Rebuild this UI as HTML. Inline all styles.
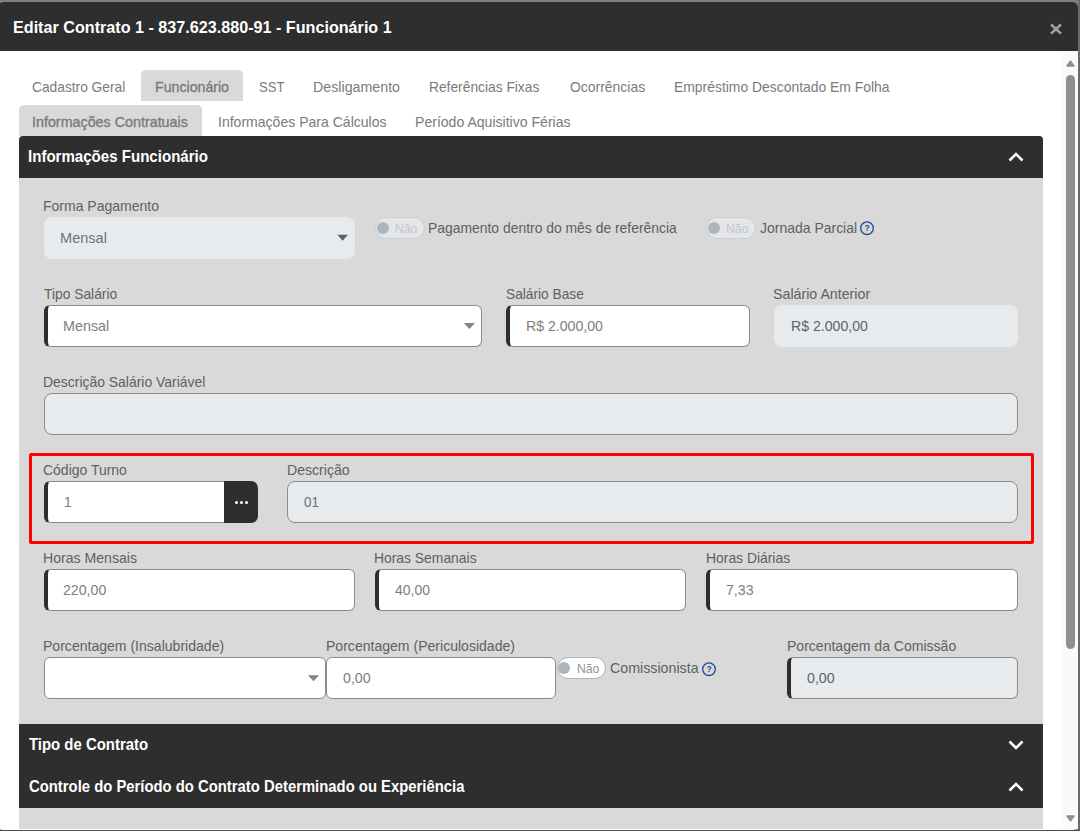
<!DOCTYPE html>
<html><head><meta charset="utf-8">
<style>
html,body{margin:0;padding:0;width:1080px;height:831px;overflow:hidden;background:#7f7f7f;font-family:"Liberation Sans",sans-serif;}
.a{position:absolute;box-sizing:border-box;}
.t{position:absolute;white-space:nowrap;line-height:1;transform-origin:0 0;font-family:"Liberation Sans",sans-serif;}
</style></head><body>
<!-- right strip -->
<div class=a style="left:1078px;top:0;width:2px;height:831px;background:#6a6a6a"></div>
<div class=a style="left:0;top:830px;width:1080px;height:1px;background:#4d4d4d"></div>
<!-- dialog -->
<div class=a style="left:-2px;top:2px;width:1080px;height:828px;background:#fff;border-radius:5px;overflow:hidden">
  <div class=a style="left:0;top:0;width:1080px;height:49px;background:#2e2e2e"></div>
</div>
<!-- close x -->
<svg class=a style="left:1048px;top:21px" width="16" height="16" viewBox="0 0 16 16"><path d="M3 3.5 L13 12.6 M13 3.5 L3 12.6" stroke="#a3a3a3" stroke-width="2.5" fill="none"/></svg>
<!-- scrollbar -->
<div class=a style="left:1063px;top:51px;width:15px;height:778px;background:#fafafa"></div>
<svg class=a style="left:1066px;top:60px" width="9" height="7" viewBox="0 0 9 7"><path d="M4.5 1.1 L8.1 6 L0.9 6 Z" fill="#8f8f8f" stroke="#8f8f8f" stroke-width="1.4" stroke-linejoin="round"/></svg>
<div class=a style="left:1066px;top:75px;width:9px;height:574px;background:#8f8f8f;border-radius:4.5px"></div>
<svg class=a style="left:1066px;top:815px" width="9" height="7" viewBox="0 0 9 7"><path d="M0.9 1 L8.1 1 L4.5 5.9 Z" fill="#8f8f8f" stroke="#8f8f8f" stroke-width="1.4" stroke-linejoin="round"/></svg>
<!-- tabs -->
<div class=a style="left:141px;top:70px;width:102px;height:31px;background:#d9d9d9;border-radius:5px 5px 0 0"></div>
<div class=a style="left:19px;top:105px;width:183px;height:31px;background:#d9d9d9;border-radius:5px 5px 0 0"></div>
<!-- section 1 -->
<div class=a style="left:19px;top:136px;width:1024px;height:42px;background:#2e2e2e;border-radius:4px 4px 0 0"></div>
<svg class=a style="left:1006px;top:149px" width="20" height="16" viewBox="0 0 20 16"><path d="M3.5 11.5 L10 5 L16.5 11.5" stroke="#fff" stroke-width="2.6" fill="none"/></svg>
<div class=a style="left:19px;top:178px;width:1024px;height:546px;background:#d9d9d9"></div>
<!-- section 2,3 -->
<div class=a style="left:19px;top:724px;width:1024px;height:84px;background:#2e2e2e"></div>
<svg class=a style="left:1006px;top:737px" width="20" height="16" viewBox="0 0 20 16"><path d="M3.5 4.5 L10 11 L16.5 4.5" stroke="#fff" stroke-width="2.6" fill="none"/></svg>
<svg class=a style="left:1006px;top:779px" width="20" height="16" viewBox="0 0 20 16"><path d="M3.5 11.5 L10 5 L16.5 11.5" stroke="#fff" stroke-width="2.6" fill="none"/></svg>
<div class=a style="left:19px;top:808px;width:1024px;height:21px;background:#d9d9d9"></div>

<!-- Row A -->
<div class=a style="left:44px;top:217px;width:311px;height:42px;background:#e8ebee;border-radius:8px"></div>
<svg class=a style="left:336px;top:233px" width="14" height="9" viewBox="0 0 14 9"><path d="M1.3 1.8 L12 1.8 L6.65 7.8 Z" fill="#5a636b"/></svg>
<div class=a style="left:375px;top:217px;width:50px;height:22px;background:#e4e6e9;border:1px solid #c9cdd1;border-radius:11px"></div>
<div class=a style="left:377px;top:222px;width:12px;height:12px;background:#adb5bd;border-radius:50%"></div>
<div class=a style="left:706px;top:217px;width:50px;height:22px;background:#e4e6e9;border:1px solid #c9cdd1;border-radius:11px"></div>
<div class=a style="left:708px;top:222px;width:12px;height:12px;background:#adb5bd;border-radius:50%"></div>
<svg class=a style="left:859px;top:220px" width="16" height="16" viewBox="0 0 16 16"><circle cx="8" cy="8.2" r="6.3" stroke="#22508e" stroke-width="1.35" fill="none"/><text x="8" y="11.2" text-anchor="middle" font-family="Liberation Sans" font-weight="700" font-size="8.5" fill="#22508e">?</text></svg>

<!-- Row B -->
<div class=a style="left:44px;top:305px;width:438px;height:42px;background:#fff;border:1px solid #8c8c8c;border-left:4px solid #2e2e2e;border-radius:6px"></div>
<svg class=a style="left:462px;top:321px" width="14" height="9" viewBox="0 0 14 9"><path d="M1.9 1.9 L12.9 1.9 L7.4 8 Z" fill="#858585"/></svg>
<div class=a style="left:506px;top:305px;width:244px;height:42px;background:#fff;border:1px solid #8c8c8c;border-left:4px solid #2e2e2e;border-radius:6px"></div>
<div class=a style="left:774px;top:305px;width:244px;height:42px;background:#e8ebee;border-radius:8px"></div>

<!-- Row C -->
<div class=a style="left:44px;top:393px;width:974px;height:42px;background:#e8ebee;border:1px solid #8c8c8c;border-radius:8px"></div>

<!-- Row D -->
<div class=a style="left:29px;top:453px;width:1005px;height:91px;border:3px solid #ff0000;border-radius:2px"></div>
<div class=a style="left:44px;top:481px;width:182px;height:42px;background:#fff;border:1px solid #8c8c8c;border-left:4px solid #2e2e2e;border-radius:6px 0 0 6px"></div>
<div class=a style="left:224px;top:481px;width:34px;height:42px;background:#2e2e2e;border-radius:0 7px 7px 0"></div>
<div class=a style="left:234.5px;top:500.6px;width:3.6px;height:3.6px;background:#fff;border-radius:50%"></div>
<div class=a style="left:239.5px;top:500.6px;width:3.6px;height:3.6px;background:#fff;border-radius:50%"></div>
<div class=a style="left:244.5px;top:500.6px;width:3.6px;height:3.6px;background:#fff;border-radius:50%"></div>
<div class=a style="left:287px;top:481px;width:731px;height:42px;background:#e8ebee;border:1px solid #8c8c8c;border-radius:8px"></div>

<!-- Row E -->
<div class=a style="left:44px;top:569px;width:311px;height:42px;background:#fff;border:1px solid #8c8c8c;border-left:4px solid #2e2e2e;border-radius:6px"></div>
<div class=a style="left:375px;top:569px;width:311px;height:42px;background:#fff;border:1px solid #8c8c8c;border-left:4px solid #2e2e2e;border-radius:6px"></div>
<div class=a style="left:706px;top:569px;width:312px;height:42px;background:#fff;border:1px solid #8c8c8c;border-left:4px solid #2e2e2e;border-radius:6px"></div>

<!-- Row F -->
<div class=a style="left:44px;top:657px;width:282px;height:42px;background:#fff;border:1px solid #8c8c8c;border-radius:6px"></div>
<svg class=a style="left:306px;top:673px" width="14" height="9" viewBox="0 0 14 9"><path d="M1.9 2.3 L13.1 2.3 L7.5 8.2 Z" fill="#858585"/></svg>
<div class=a style="left:326px;top:657px;width:230px;height:42px;background:#fff;border:1px solid #8c8c8c;border-radius:6px"></div>
<div class=a style="left:557px;top:657px;width:49px;height:22px;background:#fff;border:1px solid #b0b6bc;border-radius:11px"></div>
<div class=a style="left:558px;top:662px;width:12px;height:12px;background:#adb5bd;border-radius:50%"></div>
<svg class=a style="left:701px;top:661px" width="16" height="16" viewBox="0 0 16 16"><circle cx="8" cy="8.2" r="6.3" stroke="#22508e" stroke-width="1.35" fill="none"/><text x="8" y="11.2" text-anchor="middle" font-family="Liberation Sans" font-weight="700" font-size="8.5" fill="#22508e">?</text></svg>
<div class=a style="left:787px;top:657px;width:231px;height:42px;background:#e8ebee;border:1px solid #8c8c8c;border-left:4px solid #2e2e2e;border-radius:6px"></div>

<div class=t style="left:13.04px;top:19px;font-size:17px;font-weight:700;color:#ffffff;transform:scaleX(0.9499);">Editar Contrato 1 - 837.623.880-91 - Funcionário 1</div>
<div class=t style="left:32.17px;top:80px;font-size:14.5px;font-weight:400;color:#7b7b7b;transform:scaleX(0.9484);">Cadastro Geral</div>
<div class=t style="left:154.66px;top:80px;font-size:14.5px;font-weight:400;color:#7b7b7b;transform:scaleX(0.9767);-webkit-text-stroke:0.35px #7b7b7b;">Funcionário</div>
<div class=t style="left:258.58px;top:80px;font-size:14.5px;font-weight:400;color:#7b7b7b;transform:scaleX(0.8996);">SST</div>
<div class=t style="left:313.16px;top:80px;font-size:14.5px;font-weight:400;color:#7b7b7b;transform:scaleX(0.9817);">Desligamento</div>
<div class=t style="left:429.20px;top:80px;font-size:14.5px;font-weight:400;color:#7b7b7b;transform:scaleX(0.9507);">Referências Fixas</div>
<div class=t style="left:569.71px;top:80px;font-size:14.5px;font-weight:400;color:#7b7b7b;transform:scaleX(0.9611);">Ocorrências</div>
<div class=t style="left:674.19px;top:80px;font-size:14.5px;font-weight:400;color:#7b7b7b;transform:scaleX(0.9588);">Empréstimo Descontado Em Folha</div>
<div class=t style="left:32.21px;top:115px;font-size:14.5px;font-weight:400;color:#7b7b7b;transform:scaleX(0.9866);-webkit-text-stroke:0.35px #7b7b7b;">Informações Contratuais</div>
<div class=t style="left:217.73px;top:115px;font-size:14.5px;font-weight:400;color:#7b7b7b;transform:scaleX(0.9681);">Informações Para Cálculos</div>
<div class=t style="left:415.47px;top:115px;font-size:14.5px;font-weight:400;color:#7b7b7b;transform:scaleX(0.9700);">Período Aquisitivo Férias</div>
<div class=t style="left:28.19px;top:148px;font-size:16.5px;font-weight:700;color:#ffffff;transform:scaleX(0.9130);">Informações Funcionário</div>
<div class=t style="left:29.46px;top:736px;font-size:16.5px;font-weight:700;color:#ffffff;transform:scaleX(0.9042);">Tipo de Contrato</div>
<div class=t style="left:28.76px;top:778px;font-size:16.5px;font-weight:700;color:#ffffff;transform:scaleX(0.8995);">Controle do Período do Contrato Determinado ou Experiência</div>
<div class=t style="left:43.08px;top:199px;font-size:14.5px;font-weight:400;color:#606060;transform:scaleX(0.9659);">Forma Pagamento</div>
<div class=t style="left:428.19px;top:221px;font-size:14.5px;font-weight:400;color:#606060;transform:scaleX(0.9585);">Pagamento dentro do mês de referência</div>
<div class=t style="left:759.84px;top:221px;font-size:14.5px;font-weight:400;color:#606060;transform:scaleX(0.9638);">Jornada Parcial</div>
<div class=t style="left:44.23px;top:287px;font-size:14.5px;font-weight:400;color:#606060;transform:scaleX(0.9524);">Tipo Salário</div>
<div class=t style="left:505.92px;top:287px;font-size:14.5px;font-weight:400;color:#606060;transform:scaleX(0.9472);">Salário Base</div>
<div class=t style="left:773.18px;top:287px;font-size:14.5px;font-weight:400;color:#606060;transform:scaleX(0.9797);">Salário Anterior</div>
<div class=t style="left:43.38px;top:375px;font-size:14.5px;font-weight:400;color:#606060;transform:scaleX(0.9610);">Descrição Salário Variável</div>
<div class=t style="left:43.25px;top:463px;font-size:14.5px;font-weight:400;color:#606060;transform:scaleX(0.9636);">Código Turno</div>
<div class=t style="left:286.87px;top:463px;font-size:14.5px;font-weight:400;color:#606060;transform:scaleX(0.9715);">Descrição</div>
<div class=t style="left:43.17px;top:551px;font-size:14.5px;font-weight:400;color:#606060;transform:scaleX(0.9713);">Horas Mensais</div>
<div class=t style="left:374.39px;top:551px;font-size:14.5px;font-weight:400;color:#606060;transform:scaleX(0.9569);">Horas Semanais</div>
<div class=t style="left:705.59px;top:551px;font-size:14.5px;font-weight:400;color:#606060;transform:scaleX(0.9578);">Horas Diárias</div>
<div class=t style="left:43.27px;top:639px;font-size:14.5px;font-weight:400;color:#606060;transform:scaleX(0.9687);">Porcentagem (Insalubridade)</div>
<div class=t style="left:325.67px;top:639px;font-size:14.5px;font-weight:400;color:#606060;transform:scaleX(0.9690);">Porcentagem (Periculosidade)</div>
<div class=t style="left:609.73px;top:661px;font-size:14.5px;font-weight:400;color:#606060;transform:scaleX(0.9812);">Comissionista</div>
<div class=t style="left:786.77px;top:639px;font-size:14.5px;font-weight:400;color:#606060;transform:scaleX(0.9675);">Porcentagem da Comissão</div>
<div class=t style="left:59.63px;top:231px;font-size:14.5px;font-weight:400;color:#6d737a;transform:scaleX(1.0045);">Mensal</div>
<div class=t style="left:62.95px;top:319px;font-size:14.5px;font-weight:400;color:#7e7e7e;transform:scaleX(0.9888);">Mensal</div>
<div class=t style="left:525.87px;top:319px;font-size:14.5px;font-weight:400;color:#7e7e7e;transform:scaleX(0.9732);">R$ 2.000,00</div>
<div class=t style="left:790.57px;top:319px;font-size:14.5px;font-weight:400;color:#5f6368;transform:scaleX(0.9732);">R$ 2.000,00</div>
<div class=t style="left:63.69px;top:495px;font-size:14.5px;font-weight:400;color:#7e7e7e;transform:scaleX(1.0000);">1</div>
<div class=t style="left:304.24px;top:495px;font-size:14.5px;font-weight:400;color:#6a6f75;transform:scaleX(0.9230);">01</div>
<div class=t style="left:63.38px;top:583px;font-size:14.5px;font-weight:400;color:#7e7e7e;transform:scaleX(0.9761);">220,00</div>
<div class=t style="left:395.23px;top:583px;font-size:14.5px;font-weight:400;color:#7e7e7e;transform:scaleX(0.9639);">40,00</div>
<div class=t style="left:725.77px;top:583px;font-size:14.5px;font-weight:400;color:#7e7e7e;transform:scaleX(0.9762);">7,33</div>
<div class=t style="left:342.80px;top:671px;font-size:14.5px;font-weight:400;color:#7e7e7e;transform:scaleX(0.9796);">0,00</div>
<div class=t style="left:806.80px;top:671px;font-size:14.5px;font-weight:400;color:#5f6368;transform:scaleX(0.9796);">0,00</div>
<div class=t style="left:395.49px;top:222px;font-size:13px;font-weight:400;color:#c3c7cb;transform:scaleX(0.9362);">Não</div>
<div class=t style="left:726.29px;top:222px;font-size:13px;font-weight:400;color:#c3c7cb;transform:scaleX(0.9362);">Não</div>
<div class=t style="left:577.19px;top:662px;font-size:13px;font-weight:400;color:#8e959b;transform:scaleX(0.9362);">Não</div>
</body></html>
